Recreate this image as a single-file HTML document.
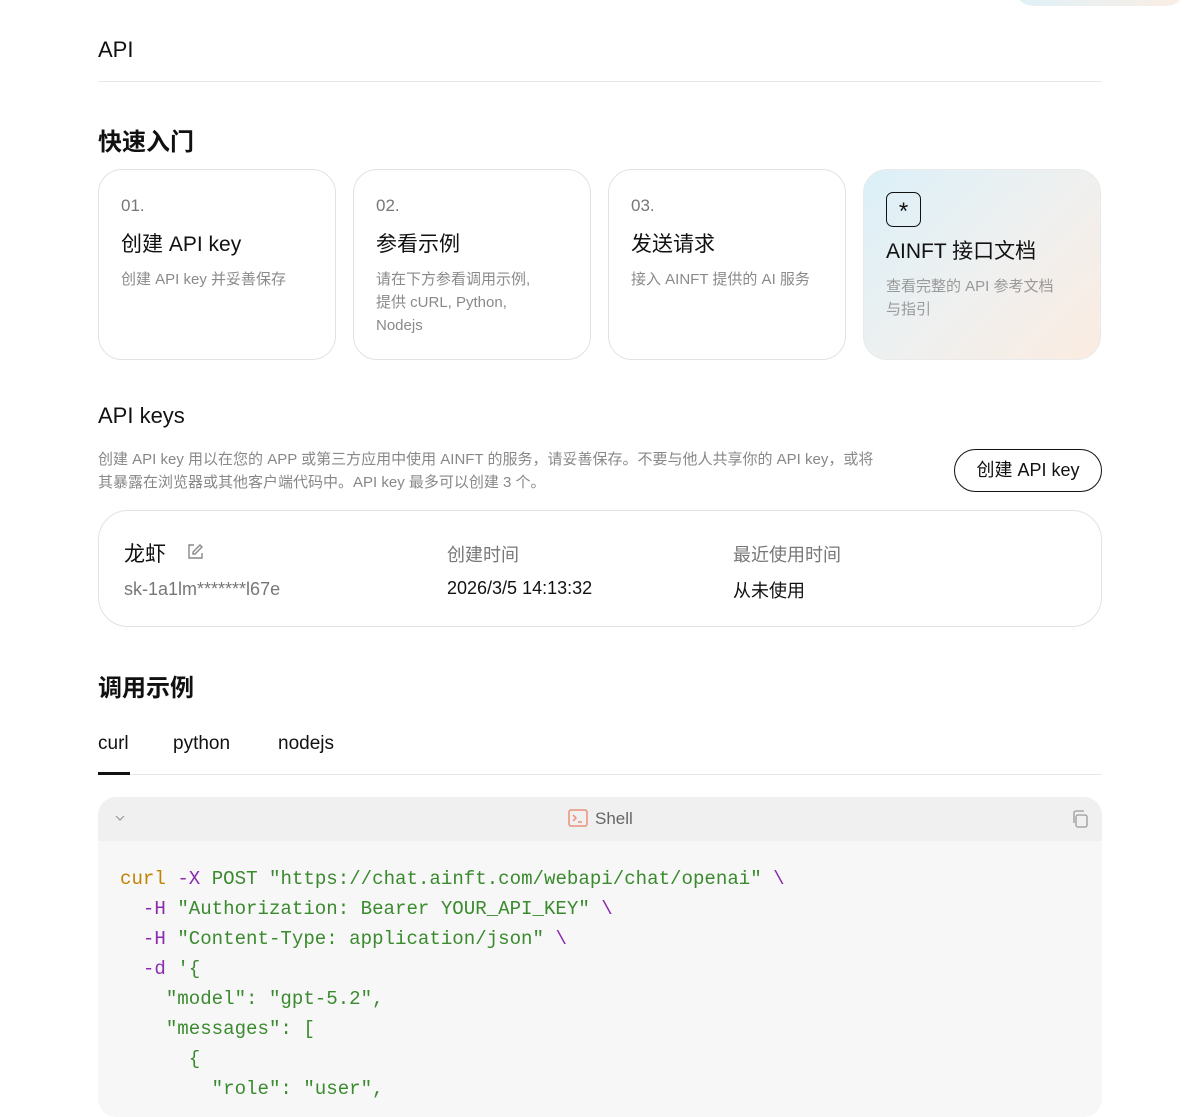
<!DOCTYPE html>
<html><head><meta charset="utf-8"><style>
*{box-sizing:border-box;margin:0;padding:0}
body{width:1200px;height:1104px;overflow:hidden;background:#fff;font-family:"Liberation Sans","Noto Sans CJK SC",sans-serif;color:#111;position:relative}
.a{position:absolute}
.topblob{left:1015px;top:-30px;width:170px;height:36px;border-radius:20px;background:linear-gradient(90deg,#dff1f7,#fbeee4)}
h1{position:absolute;left:98px;top:37px;font-size:22px;font-weight:400}
.hr{position:absolute;left:98px;width:1004px;height:1px;background:#e8e8e8}
h2{position:absolute;left:98px;font-size:24px;font-weight:700}
.card{position:absolute;top:169px;width:238px;height:191px;border:1px solid #e2e2e2;border-radius:24px;padding:26px 22px}
.num{font-size:17px;color:#777}
.ct{font-size:21px;margin-top:12px}
.cd{font-size:15px;color:#8a8a8a;margin-top:10px;line-height:23px}
.doc{background:linear-gradient(135deg,#dbf0f8 0%,#eef0f0 50%,#fbece1 100%);border-color:#eaeaea}
.star{width:35px;height:35px;border:1.5px solid #111;border-radius:7px;text-align:center;font-size:24px;line-height:38px;margin-top:-4px}
.keybox{position:absolute;left:98px;top:510px;width:1004px;height:117px;border:1px solid #e2e2e2;border-radius:30px}
.btn{position:absolute;left:954px;top:449px;width:148px;height:43px;border:1.5px solid #111;border-radius:22px;font-size:18px;text-align:center;line-height:40px}
.code{position:absolute;left:98px;top:797px;width:1004px;height:320px;background:#f7f7f7;border-radius:18px;overflow:hidden}
.ch{height:44px;background:#f0f0f0;position:relative}
pre{font-family:"Liberation Mono",monospace;font-size:19.1px;line-height:30px;position:absolute;left:22px;top:67px;color:#2b2b2b}
.o{color:#c18401}.p{color:#8a2bb0}.g{color:#3a8a2e}
</style></head><body>
<div class="a topblob"></div>
<h1>API</h1>
<div class="hr" style="top:81px"></div>
<h2 style="top:122px">快速入门</h2>
<div class="card" style="left:98px"><div class="num">01.</div><div class="ct">创建 API key</div><div class="cd">创建 API key 并妥善保存</div></div>
<div class="card" style="left:353px"><div class="num">02.</div><div class="ct">参看示例</div><div class="cd">请在下方参看调用示例,<br>提供 cURL, Python,<br>Nodejs</div></div>
<div class="card" style="left:608px"><div class="num">03.</div><div class="ct">发送请求</div><div class="cd">接入 AINFT 提供的 AI 服务</div></div>
<div class="card doc" style="left:863px"><div class="star">*</div><div class="ct" style="margin-top:8px">AINFT 接口文档</div><div class="cd" style="color:#999">查看完整的 API 参考文档<br>与指引</div></div>
<div class="a" style="left:98px;top:403px;font-size:22px">API keys</div>
<div class="a" style="left:98px;top:448px;width:830px;font-size:15px;color:#888;line-height:23px">创建 API key 用以在您的 APP 或第三方应用中使用 AINFT 的服务，请妥善保存。不要与他人共享你的 API key，或将<br>其暴露在浏览器或其他客户端代码中。API key 最多可以创建 3 个。</div>
<div class="btn">创建 API key</div>
<div class="keybox"></div>
<div class="a" style="left:124px;top:538px;font-size:21px">龙虾</div>
<svg class="a" style="left:186px;top:543px" width="18" height="18" viewBox="0 0 18 18" fill="none" stroke="#888" stroke-width="1.4"><path d="M8 2H3v13h13v-5"/><path d="M14 2l2 2-7 7H7V9z"/></svg>
<div class="a" style="left:124px;top:579px;font-size:18px;color:#777">sk-1a1lm*******l67e</div>
<div class="a" style="left:447px;top:541px;font-size:18px;color:#777">创建时间</div>
<div class="a" style="left:447px;top:578px;font-size:18px">2026/3/5 14:13:32</div>
<div class="a" style="left:733px;top:541px;font-size:18px;color:#777">最近使用时间</div>
<div class="a" style="left:733px;top:577px;font-size:18px">从未使用</div>
<h2 style="top:668px">调用示例</h2>
<div class="a" style="left:98px;top:733px;font-size:19px">curl</div>
<div class="a" style="left:173px;top:733px;font-size:19px">python</div>
<div class="a" style="left:278px;top:733px;font-size:19px">nodejs</div>
<div class="hr" style="top:774px"></div>
<div class="a" style="left:98px;top:772px;width:32px;height:3px;background:#111"></div>
<div class="code">
<div class="ch">
<svg class="a" style="left:16px;top:16px" width="12" height="10" viewBox="0 0 12 10" fill="none" stroke="#999" stroke-width="1.2"><path d="M2 3l4 4 4-4"/></svg>
<svg class="a" style="left:470px;top:12px" width="20" height="18" viewBox="0 0 20 18" fill="none" stroke="#e8907a" stroke-width="1.5"><rect x="1" y="1" width="18" height="16" rx="2"/><path d="M5 6l3 3-3 3M10 13h4"/></svg>
<div class="a" style="left:497px;top:12px;font-size:17px;color:#666">Shell</div>
<svg class="a" style="left:972px;top:12px" width="20" height="20" viewBox="0 0 20 20" fill="none" stroke="#999" stroke-width="1.3"><rect x="6" y="6" width="11" height="12" rx="2"/><path d="M4 14V4a2 2 0 012-2h8"/></svg>
</div>
<pre><span class="o">curl</span> <span class="p">-X</span> <span class="g">POST "https://chat.ainft.com/webapi/chat/openai"</span> <span class="p">\</span>
  <span class="p">-H</span> <span class="g">"Authorization: Bearer YOUR_API_KEY"</span> <span class="p">\</span>
  <span class="p">-H</span> <span class="g">"Content-Type: application/json"</span> <span class="p">\</span>
  <span class="p">-d</span> <span class="g">'{</span>
<span class="g">    "model": "gpt-5.2",</span>
<span class="g">    "messages": [</span>
<span class="g">      {</span>
<span class="g">        "role": "user",</span></pre>
</div>
</body></html>
